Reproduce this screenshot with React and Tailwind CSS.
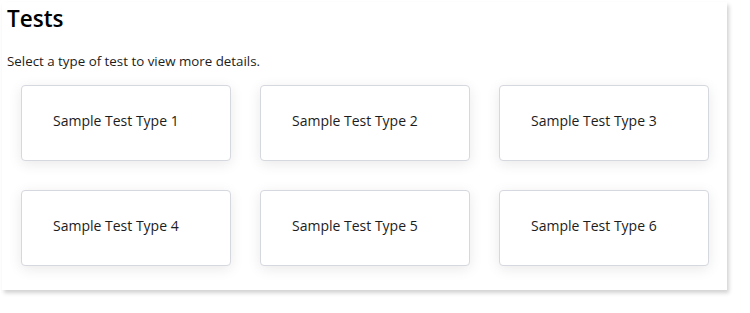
import React from "react";

const testTypes = [
  "Sample Test Type 1",
  "Sample Test Type 2",
  "Sample Test Type 3",
  "Sample Test Type 4",
  "Sample Test Type 5",
  "Sample Test Type 6",
];

export default function App() {
  return (
    <div className="w-[750px] h-[313px] bg-white font-['Open_Sans',sans-serif] text-[#1c1c1c]">
      <div className="ml-[2px] mt-[2px] w-[725px] h-[288px] bg-white shadow-[2px_3px_4px_rgba(0,0,0,0.18)] pt-[1px] pb-6">
        {/* Header */}
        <h1 className="pl-[5px] text-[22.5px] leading-[32px] font-semibold text-black">Tests</h1>
        <p className="pl-[5px] mt-4 text-[13.33px] leading-5">
          Select a type of test to view more details.
        </p>

        {/* Cards */}
        <div className="mt-[14px] ml-[19px] grid grid-cols-[repeat(3,210px)] gap-[29px]">
          {testTypes.map((name) => (
            <button
              key={name}
              className="h-[76px] flex items-center pl-[31px] pb-1 bg-white border border-[#d6d8e0] rounded-[4px] shadow-[0_3px_14px_rgba(0,0,0,0.09)] text-left text-[14px] leading-5"
            >
              {name}
            </button>
          ))}
        </div>
      </div>
    </div>
  );
}
